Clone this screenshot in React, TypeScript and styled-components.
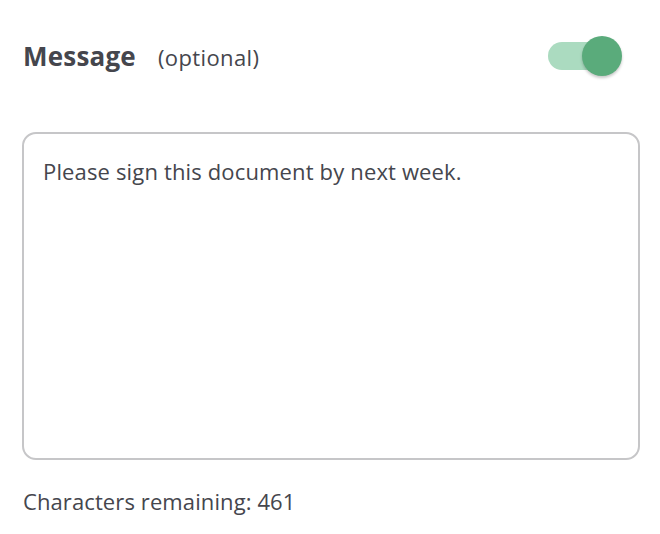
import { useState } from "react";
import styled, { createGlobalStyle } from "styled-components";

const GlobalStyle = createGlobalStyle`
  html, body {
    margin: 0;
    padding: 0;
    background: #ffffff;
  }
  body {
    font-family: "Open Sans", "Noto Sans", sans-serif;
    color: #4a4b52;
  }
`;

const Wrapper = styled.div`
  width: 660px;
  height: 534px;
  box-sizing: border-box;
  padding: 30px 22px 0 22px;
  display: flex;
  flex-direction: column;
`;

const Header = styled.div`
  display: flex;
  align-items: center;
  justify-content: space-between;
  height: 52px;
`;

const TitleBox = styled.div`
  display: flex;
  align-items: baseline;
  gap: 22px;
  padding-left: 1px;
`;

const Title = styled.span`
  font-size: 26px;
  font-weight: 700;
  color: #45464d;
  letter-spacing: 0.2px;
`;

const Optional = styled.span`
  font-size: 22px;
  font-weight: 400;
  color: #45464d;
  letter-spacing: 0.4px;
`;

const ToggleButton = styled.button<{ $on: boolean }>`
  position: relative;
  width: 76px;
  height: 40px;
  margin-right: 16px;
  padding: 0;
  border: none;
  background: transparent;
  cursor: pointer;

  &::before {
    content: "";
    position: absolute;
    left: 2px;
    top: 6px;
    width: 64px;
    height: 28px;
    border-radius: 14px;
    background: ${(p) => (p.$on ? "#abdbc0" : "#d5d5d8")};
  }
`;

const Thumb = styled.span<{ $on: boolean }>`
  position: absolute;
  top: 0;
  left: ${(p) => (p.$on ? "36px" : "0")};
  width: 40px;
  height: 40px;
  border-radius: 50%;
  background: ${(p) => (p.$on ? "#5aab7b" : "#f4f4f4")};
  box-shadow: 0 2px 3px rgba(0, 0, 0, 0.22);
`;

const MessageBox = styled.textarea`
  margin-top: 50px;
  width: 618px;
  height: 328px;
  box-sizing: border-box;
  border: 2px solid #c6c6c8;
  border-radius: 14px;
  padding: 22px 19px;
  font-family: "Open Sans", "Noto Sans", sans-serif;
  font-size: 22px;
  line-height: 30px;
  color: #45464d;
  resize: none;
  outline: none;
  letter-spacing: 0.15px;
`;

const Counter = styled.div`
  margin-top: 26px;
  padding-left: 1px;
  font-size: 22px;
  line-height: 30px;
  color: #45464d;
  letter-spacing: 0.1px;
`;

const MAX = 500;

export default function App() {
  const [on, setOn] = useState(true);
  const [text, setText] = useState("Please sign this document by next week.");

  return (
    <>
      <GlobalStyle />
      <Wrapper>
        <Header>
          <TitleBox>
            <Title>Message</Title>
            <Optional>(optional)</Optional>
          </TitleBox>
          <ToggleButton $on={on} onClick={() => setOn(!on)} aria-label="Toggle message">
            <Thumb $on={on} />
          </ToggleButton>
        </Header>
        <MessageBox
          value={text}
          maxLength={MAX}
          onChange={(e) => setText(e.target.value)}
        />
        <Counter>Characters remaining: {MAX - text.length}</Counter>
      </Wrapper>
    </>
  );
}
